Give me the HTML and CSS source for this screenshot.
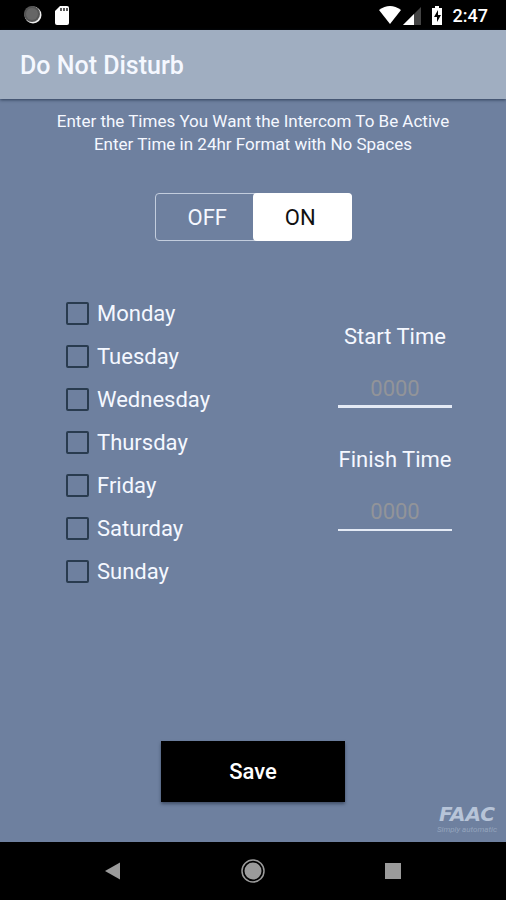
FILE: index.html
```html
<!DOCTYPE html>
<html lang="en">
<head>
<meta charset="utf-8">
<meta name="viewport" content="width=device-width, initial-scale=1">
<title>Do Not Disturb</title>
<link rel="stylesheet" href="styles.css">
</head>
<body>
<div class="status">
  <svg width="50" height="30" viewBox="0 0 50 30" aria-hidden="true">
    <circle cx="11" cy="15" r="8.500" fill="#eee"/>
    <circle cx="10" cy="14" r="8" fill="#555"/>
    <circle cx="10" cy="14" r="6" fill="#666"/>
    <path d="M38 6h7q2 0 2 2v15q0 2-2 2H35q-2 0-2-2V11z" fill="#fff"/>
    <path d="M39 8v3M42 8v3M45 8v3" stroke="#000" stroke-width="1.300"/>
  </svg>
  <div class="status-right">
    <svg width="66" height="30" viewBox="0 0 66 30" aria-hidden="true">
      <path d="M0 10q11-8 22 0L11 24z" fill="#fff"/>
      <path d="M42 7v18H24z" fill="#444"/>
      <path d="M35 14v11H24z" fill="#fff"/>
      <path d="M53 8h3V6h4v2h3v17H53z" fill="#fff"/>
      <path d="M59 10l-4 7h3v5l4-7h-3z" fill="#000"/>
    </svg>
    <time class="clock">2:47</time>
  </div>
</div>
<header class="bar"><h1>Do Not Disturb</h1></header>
<main>
  <p class="intro">Enter the Times You Want the Intercom To Be Active<br>Enter Time in 24hr Format with No Spaces</p>
  <div class="toggle" role="group" aria-label="Do not disturb">
    <button type="button" aria-pressed="false">OFF</button>
    <button type="button" class="on" aria-pressed="true">ON</button>
  </div>
  <form class="schedule">
    <div class="days">
      <label><input type="checkbox">Monday</label>
      <label><input type="checkbox">Tuesday</label>
      <label><input type="checkbox">Wednesday</label>
      <label><input type="checkbox">Thursday</label>
      <label><input type="checkbox">Friday</label>
      <label><input type="checkbox">Saturday</label>
      <label><input type="checkbox">Sunday</label>
    </div>
    <div class="times">
      <div class="field">
        <label for="start">Start Time</label>
        <input id="start" class="focused" type="text" inputmode="numeric" placeholder="0000">
      </div>
      <div class="field">
        <label for="finish">Finish Time</label>
        <input id="finish" type="text" inputmode="numeric" placeholder="0000">
      </div>
    </div>
  </form>
  <button type="button" class="save">Save</button>
  <div class="brand"><span class="brand-name">FAAC</span><span class="brand-line">Simply automatic</span></div>
</main>
<nav class="nav" aria-label="System">
  <button type="button" aria-label="Back"><svg width="26" height="26" viewBox="0 0 26 26"><path d="M5 13L20 4.500v17z" fill="#9b9b9b"/></svg></button>
  <button type="button" aria-label="Home"><svg width="26" height="26" viewBox="0 0 26 26"><circle cx="13" cy="13" r="11" fill="none" stroke="#9b9b9b" stroke-width="1.500"/><circle cx="13" cy="13" r="8.500" fill="#9b9b9b"/></svg></button>
  <button type="button" aria-label="Overview"><svg width="26" height="26" viewBox="0 0 26 26"><path d="M5 5h16v16H5z" fill="#9b9b9b"/></svg></button>
</nav>
</body>
</html>
```
FILE: styles.css
```css
* {
  box-sizing: border-box;
}

body {
  margin: 0;
  min-height: 100vh;
  display: flex;
  flex-direction: column;
  background: #6e809f;
  color: #f5f8ff;
  font-family: Roboto, sans-serif;
  font-size: 22px;
}

button,
input {
  font: inherit;
  color: inherit;
  border: 0;
  padding: 0;
  margin: 0;
  border-radius: 0;
  background: none;
}

.status {
  display: flex;
  justify-content: space-between;
  height: 30px;
  padding: 0 18px 0 22px;
  background: #000;
}

.status-right {
  display: flex;
  align-items: center;
  gap: 8px;
}

.clock {
  font-size: 18px;
  font-weight: 500;
  line-height: 30px;
  padding-top: 2px;
  color: #fff;
}

.bar {
  display: flex;
  align-items: center;
  height: 69px;
  padding: 2px 20px 0;
  background: #a0aec1;
  box-shadow: 0 1px 3px rgba(20, 35, 60, 0.7);
}

h1 {
  margin: 0;
  font-size: 25px;
  font-weight: 500;
}

main {
  flex: 1;
  display: flex;
  flex-direction: column;
  align-items: center;
}

.intro {
  margin: 11px 0 0;
  font-size: 17px;
  line-height: 23px;
  text-align: center;
}

.toggle {
  display: grid;
  grid-template-columns: 1fr 1fr;
  width: 197px;
  height: 48px;
  margin-top: 37px;
  border: 1px solid #c3cddd;
  border-radius: 4px;
}

.toggle button {
  padding-left: 6px;
}

.toggle .on {
  margin: -1px -1px -1px 0;
  padding: 0 4px 0 0;
  border-radius: 4px;
  background: #fff;
  color: #111;
}

.schedule {
  display: flex;
  justify-content: space-between;
  align-self: stretch;
  margin-top: 51px;
  padding: 0 54px 0 66px;
}

.days {
  display: flex;
  flex-direction: column;
}

.days label {
  display: flex;
  align-items: center;
  gap: 8px;
  height: 43px;
}

.days input {
  appearance: none;
  width: 23px;
  height: 23px;
  border: 2px solid #293b4f;
  border-radius: 2px;
}

.times {
  display: flex;
  flex-direction: column;
  gap: 36px;
  padding-top: 29px;
}

.field {
  display: flex;
  flex-direction: column;
  align-items: center;
  gap: 20px;
}

.field label {
  line-height: 32px;
}

.field input {
  width: 114px;
  height: 35px;
  padding-bottom: 2px;
  border-bottom: 2px solid #e4eaf5;
  text-align: center;
  outline: 0;
}

.field .focused {
  border-bottom-width: 3px;
}

.field input::placeholder {
  color: #929499;
  opacity: 1;
}

.save {
  width: 184px;
  height: 61px;
  margin-top: auto;
  background: #000;
  color: #fff;
  font-weight: 500;
  box-shadow: 0 2px 3px rgba(20, 30, 50, 0.5);
}

.brand {
  display: flex;
  flex-direction: column;
  align-items: center;
  align-self: flex-end;
  margin: 0 9px 8px 0;
  color: #b7c4d8;
  font-style: italic;
}

.brand-name {
  font-family: "DejaVu Sans", sans-serif;
  font-size: 20px;
  font-weight: 700;
  line-height: 24px;
}

.brand-line {
  font-size: 8px;
  line-height: 8px;
  color: #94a4bd;
}

.nav {
  display: flex;
  justify-content: space-between;
  align-items: center;
  height: 58px;
  padding: 0 100px;
  background: #000;
}

.nav svg {
  display: block;
}
```
